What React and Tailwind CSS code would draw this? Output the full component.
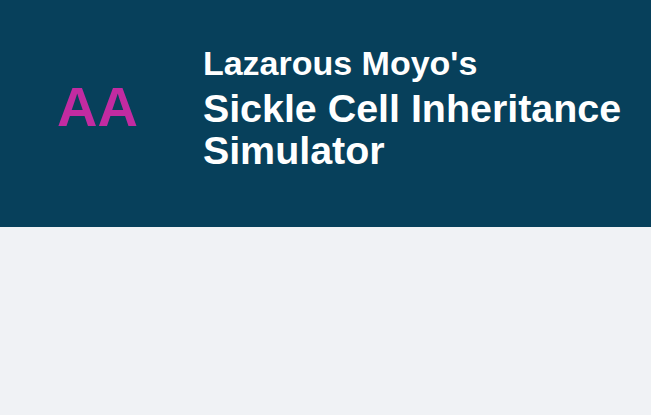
export default function App() {
  return (
    <div className="min-h-[415px] bg-[#f0f2f5]" style={{ fontFamily: '"Liberation Sans", Arial, sans-serif' }}>
      <header className="flex h-[227px] items-center bg-[#07405b] pl-[57px]">
        <div className="flex items-center pb-[18px]">
          <span className="mt-[4px] text-[56px] font-bold leading-[56px] text-[#c22ba1]">AA</span>
          <h1 className="ml-[65px] font-bold text-white">
            <span className="block text-[34px] leading-[48px]">Lazarous Moyo's</span>
            <span className="block text-[39.4px] leading-[42px]">Sickle Cell Inheritance</span>
            <span className="block text-[39.4px] leading-[42px]">Simulator</span>
          </h1>
        </div>
      </header>
    </div>
  );
}
